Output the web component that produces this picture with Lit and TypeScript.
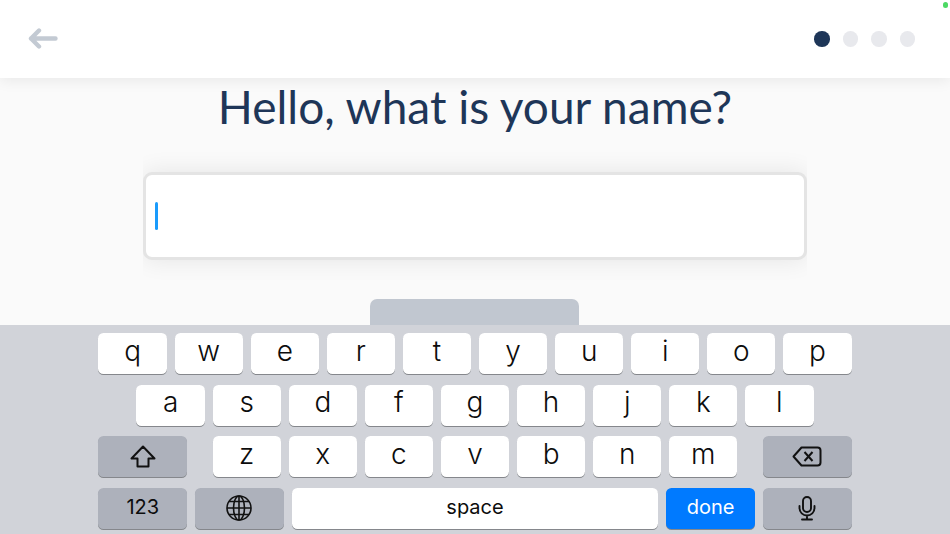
import { LitElement, html, css, svg } from 'lit';
import { customElement } from 'lit/decorators.js';

const ROW1 = ['q', 'w', 'e', 'r', 't', 'y', 'u', 'i', 'o', 'p'];
const ROW2 = ['a', 's', 'd', 'f', 'g', 'h', 'j', 'k', 'l'];
const ROW3 = ['z', 'x', 'c', 'v', 'b', 'n', 'm'];

const backArrow = svg`<path d="M3 10.5H27.5M11 2.5L3 10.5L11 18.5" fill="none" stroke="#c3cad3" stroke-width="4.4" stroke-linecap="round" stroke-linejoin="round"/>`;
const shiftIcon = svg`<path d="M13 1.5L1.5 13.5H7.5V21.5H18.5V13.5H24.5Z" fill="none" stroke="#111" stroke-width="2" stroke-linejoin="round"/>`;
const deleteIcon = svg`<path d="M9.5 1.5H25.5Q28.5 1.5 28.5 4.5V16.5Q28.5 19.5 25.5 19.5H9.5L1.5 10.5ZM12.5 6L20.5 15M20.5 6L12.5 15" fill="none" stroke="#111" stroke-width="2" stroke-linejoin="round"/>`;
const globeIcon = svg`<g fill="none" stroke="#111" stroke-width="1.6"><circle cx="13" cy="13" r="12"/><ellipse cx="13" cy="13" rx="5.5" ry="12"/><path d="M13 1V25M1 13H25M3 6.5H23M3 19.5H23"/></g>`;
const micIcon = svg`<g fill="none" stroke="#111" stroke-width="1.9" stroke-linecap="round"><rect x="5" y="1" width="8" height="15" rx="4"/><path d="M1.5 10V12A7.5 7.5 0 0 0 16.5 12V10M9 19.5V23M4 23.5H14"/></g>`;

@customElement('app-root')
export class AppRoot extends LitElement {
    static styles = css`
        :host {
            display: block;
            width: 950px;
            height: 534px;
            overflow: hidden;
            background: #fafafa;
            position: relative;
            font-family: "Inter", "Liberation Sans", sans-serif;
        }
        .status-dot {
            position: absolute;
            top: 2px;
            right: 2px;
            width: 5.5px;
            height: 5.5px;
            border-radius: 50%;
            background: #4cd964;
            z-index: 2;
        }
        .header {
            height: 78px;
            background: #fff;
            box-shadow: 0 2px 14px rgba(0, 0, 0, 0.08);
            display: flex;
            align-items: center;
            justify-content: space-between;
            padding: 0 35px 0 28px;
            position: relative;
        }
        .back {
            display: block;
            width: 30px;
            height: 21px;
            margin-top: -1px;
        }
        .dots {
            display: flex;
            gap: 13px;
        }
        .dot {
            width: 15.5px;
            height: 15.5px;
            border-radius: 50%;
            background: #e8e9ed;
        }
        .dot.active {
            background: #1e3658;
        }
        .main {
            height: 247px;
            display: flex;
            flex-direction: column;
            align-items: center;
        }
        h1 {
            margin: 0;
            height: 72px;
            line-height: 58px;
            font-family: "Lato", sans-serif;
            font-weight: 400;
            font-size: 46px;
            color: #1e3658;
        }
        .input-wrap {
            width: 664px;
            overflow: hidden;
            padding: 22px 0 26px;
        }
        .input {
            box-sizing: border-box;
            height: 88px;
            background: #fff;
            border: 3px solid #e4e4e4;
            border-radius: 9px;
            box-shadow: 0 0 24px rgba(0, 0, 0, 0.09);
            display: flex;
            align-items: center;
            padding-left: 9px;
        }
        .caret {
            width: 3px;
            height: 28px;
            border-radius: 2px;
            background: #1a9bfc;
        }
        .tab {
            width: 209px;
            height: 26px;
            margin-top: auto;
            margin-right: 1px;
            background: #c1c7d0;
            border-radius: 7px 7px 0 0;
        }
        .keyboard {
            height: 209px;
            box-sizing: border-box;
            background: #d1d3d9;
            padding: 8px 98.4px 0;
            display: flex;
            flex-direction: column;
            gap: 10.3px;
        }
        .row {
            display: flex;
            justify-content: center;
            gap: 7.8px;
        }
        .key {
            width: 68.3px;
            height: 41.3px;
            flex: none;
            border-radius: 5.5px;
            background: #fff;
            box-shadow: 0 1px 0.5px #85878c;
            display: flex;
            align-items: center;
            justify-content: center;
            color: #0c0c0c;
            font-size: 28px;
            font-weight: 350;
            line-height: 1;
            padding-bottom: 6px;
            box-sizing: border-box;
        }
        .key.fn {
            width: 88.8px;
            padding-bottom: 0;
            background: #adb1bb;
        }
        .key.label {
            font-size: 20px;
            font-weight: 400;
            padding-bottom: 2px;
        }
        .key.space {
            flex: 1;
            background: #fff;
        }
        .key.done {
            background: #007aff;
            color: #fff;
        }
        .letters {
            display: flex;
            gap: 7.8px;
            margin: 0 auto;
        }
    `;

    private letter(c: string) {
        return html`<div class="key">${c}</div>`;
    }

    render() {
        return html`
            <div class="status-dot"></div>
            <div class="header">
                <svg class="back" viewBox="0 0 30 21">${backArrow}</svg>
                <div class="dots">
                    <div class="dot active"></div>
                    <div class="dot"></div>
                    <div class="dot"></div>
                    <div class="dot"></div>
                </div>
            </div>
            <div class="main">
                <h1>Hello, what is your name?</h1>
                <div class="input-wrap">
                    <div class="input"><div class="caret"></div></div>
                </div>
                <div class="tab"></div>
            </div>
            <div class="keyboard">
                <div class="row">${ROW1.map((c) => this.letter(c))}</div>
                <div class="row">${ROW2.map((c) => this.letter(c))}</div>
                <div class="row">
                    <div class="key fn">
                        <svg width="26" height="23" viewBox="0 0 26 23">${shiftIcon}</svg>
                    </div>
                    <div class="letters">${ROW3.map((c) => this.letter(c))}</div>
                    <div class="key fn">
                        <svg width="30" height="21" viewBox="0 0 30 21">${deleteIcon}</svg>
                    </div>
                </div>
                <div class="row">
                    <div class="key fn label">123</div>
                    <div class="key fn">
                        <svg width="26" height="26" viewBox="0 0 26 26">${globeIcon}</svg>
                    </div>
                    <div class="key label space">space</div>
                    <div class="key fn label done">done</div>
                    <div class="key fn">
                        <svg width="18" height="25" viewBox="0 0 18 25">${micIcon}</svg>
                    </div>
                </div>
            </div>
        `;
    }
}
